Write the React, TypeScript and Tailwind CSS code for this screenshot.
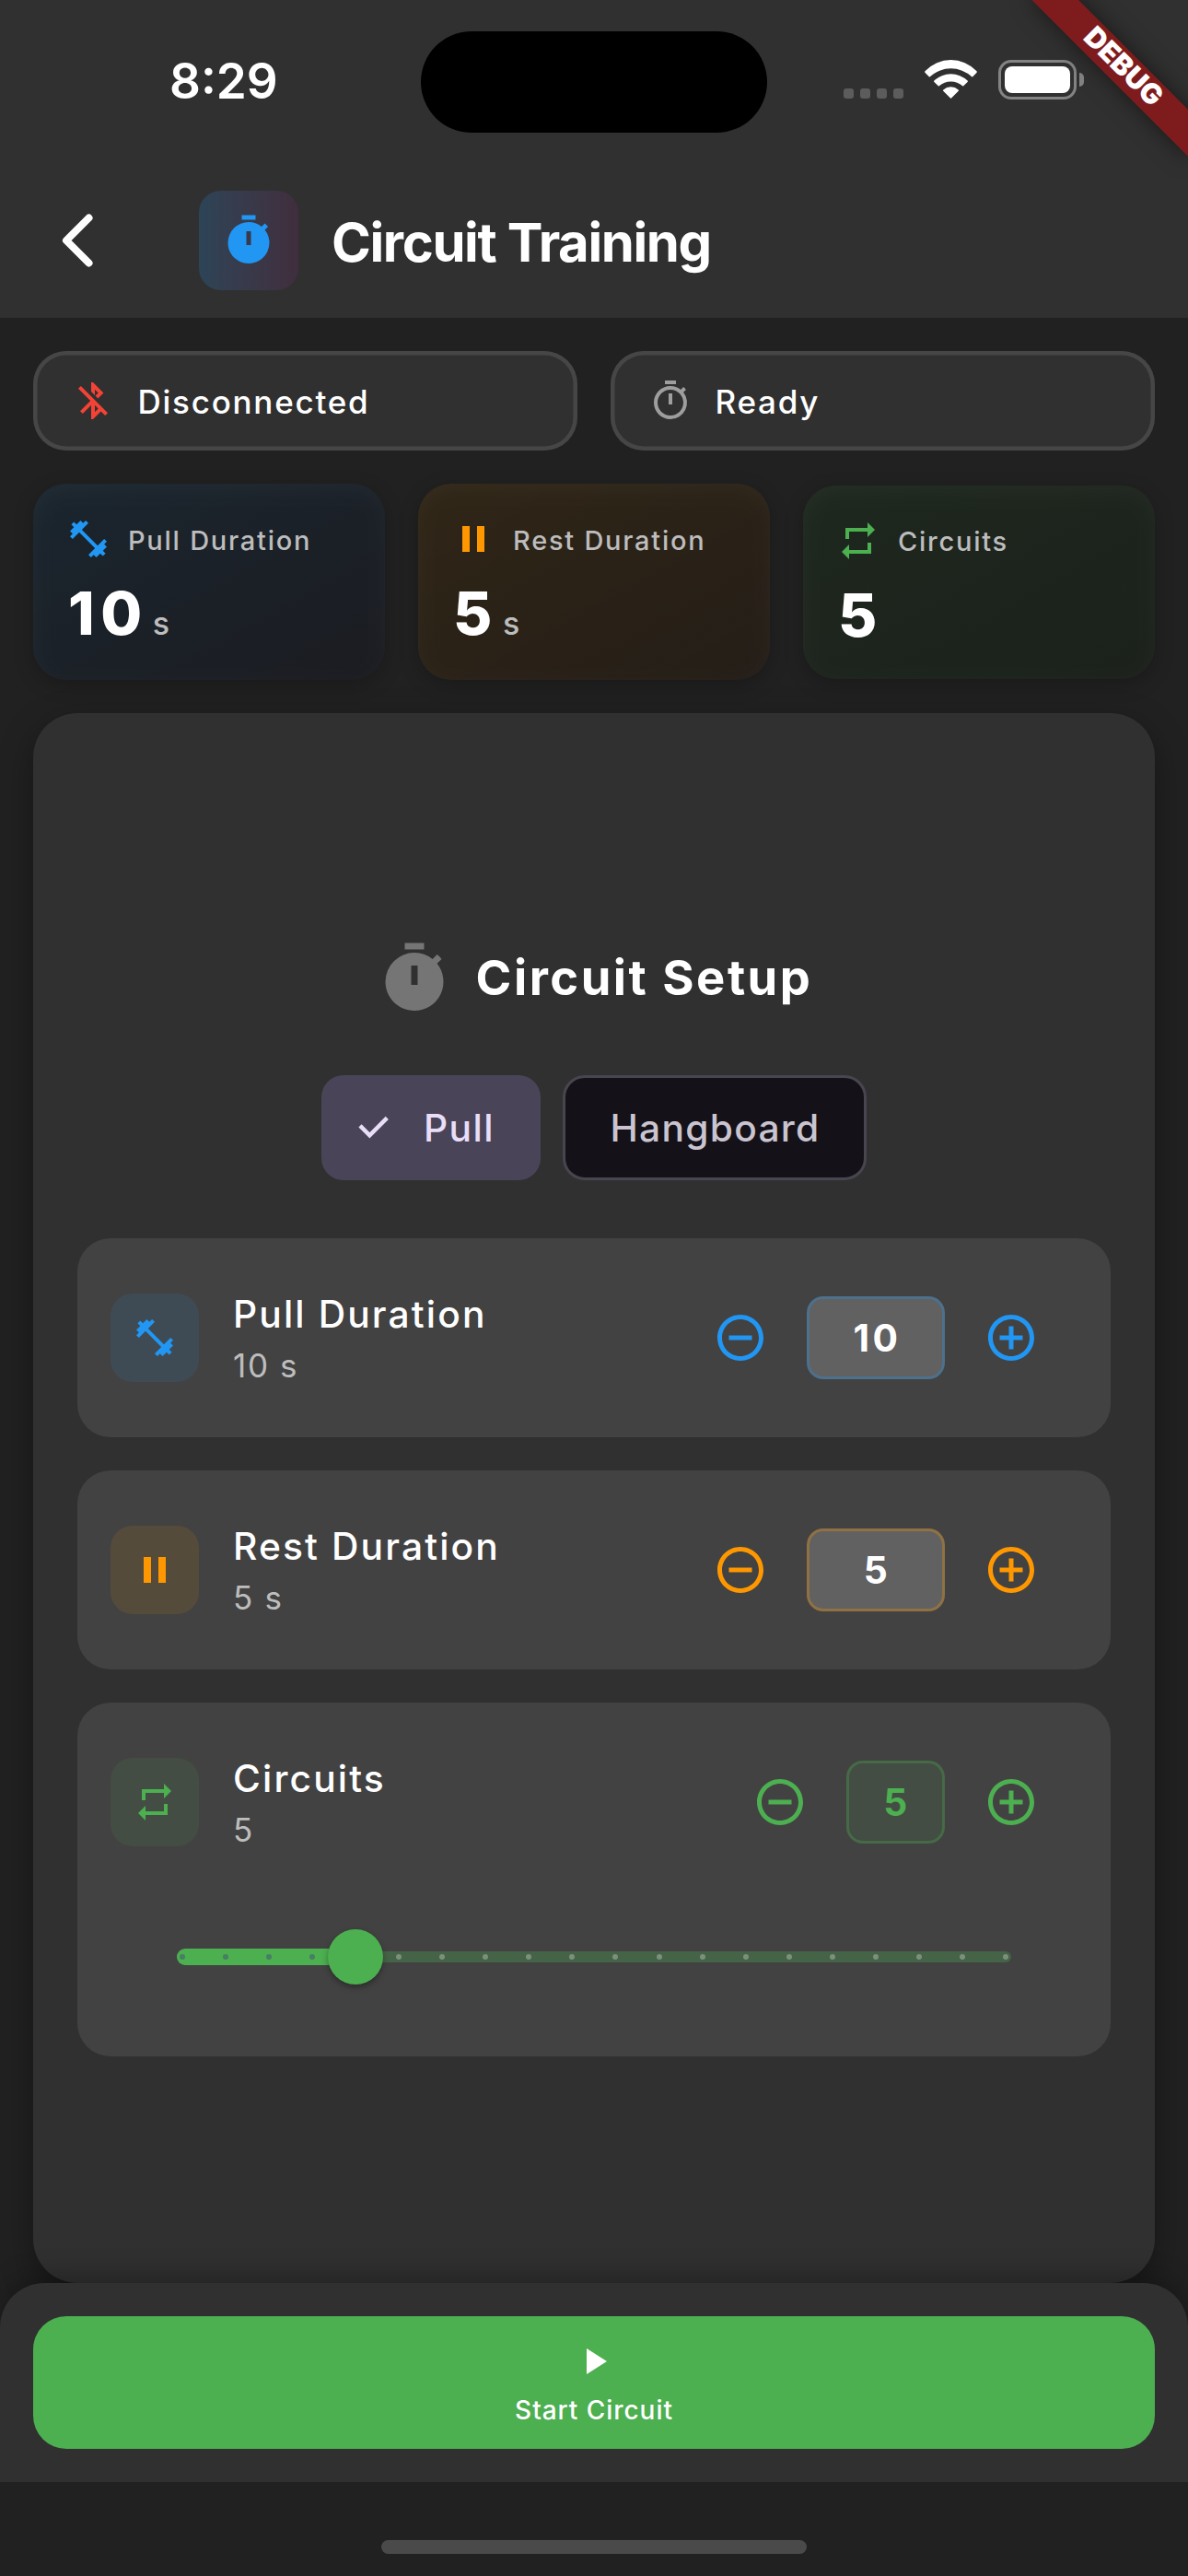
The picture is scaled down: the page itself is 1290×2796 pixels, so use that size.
import type { ReactNode } from 'react';
import {
  MdAddCircleOutline,
  MdBluetoothDisabled,
  MdFitnessCenter,
  MdOutlineTimer,
  MdPause,
  MdPlayArrow,
  MdRemoveCircleOutline,
  MdRepeat,
  MdTimer,
} from 'react-icons/md';

function WifiIcon() {
  return (
    <svg viewBox="0 0 57 42" className="mt-[65px] ml-[23px] h-[42px] w-[57px] fill-white">
      <path d="M.6 13.9Q-.3 13 .7 12.1A38 38 0 0 1 56.3 12.1Q57.300 13 56.400 13.900L52.200 18.200Q51.700 18.700 51.200 18.200A33.500 33.500 0 0 0 5.800 18.200Q5.300 18.700 4.800 18.200Z" />
      <path d="M10.400 23.900Q9.700 23.200 10.400 22.600A26 26 0 0 1 46.600 22.600Q47.300 23.200 46.600 23.900L42.200 28.300Q41.700 28.800 41.200 28.300A19.500 19.500 0 0 0 15.800 28.300Q15.300 28.800 14.800 28.300Z" />
      <path d="M20.200 33.700Q19.500 33 20.300 32.400A12.500 12.500 0 0 1 36.700 32.400Q37.500 33 36.800 33.700L29 41.500Q28.500 42 28 41.500Z" />
    </svg>
  );
}

function StatusBar() {
  return (
    <div className="flex h-[177px] items-start">
      <div className="w-[457px] pt-[56px] pl-[184px] text-[53px] leading-[64px] font-semibold text-white">8:29</div>
      <div className="mt-[34px] h-[110px] w-[376px] rounded-full bg-black" />
      <div className="mt-[96px] ml-[83px] flex w-[65px] justify-between">
        <i className="size-[11px] rounded-[3px] bg-[#5c5c5c]" />
        <i className="size-[11px] rounded-[3px] bg-[#5c5c5c]" />
        <i className="size-[11px] rounded-[3px] bg-[#5c5c5c]" />
        <i className="size-[11px] rounded-[3px] bg-[#5c5c5c]" />
      </div>
      <WifiIcon />
      <div className="mt-[65px] ml-[23px] flex items-center">
        <div className="h-[43px] w-[85px] rounded-[14px] border-[3px] border-[#838383] p-1">
          <div className="size-full rounded-[8px] bg-white" />
        </div>
        <div className="ml-[3px] h-[15px] w-[5px] rounded-r-[5px] bg-[#838383]" />
      </div>
    </div>
  );
}

function DebugRibbon() {
  return (
    <div className="absolute top-[84px] -right-[120px] z-30 flex h-9 w-60 origin-[120px_-84px] rotate-45 items-center justify-center bg-[#7e1c1d] pb-[3px] pl-[3px] text-[30.600px] leading-none font-black text-white shadow-[0_0_24px_rgba(0,0,0,0.5)]">
      DEBUG
    </div>
  );
}

function AppBar() {
  return (
    <div className="flex h-[168px] items-center pl-[66px]">
      <svg viewBox="0 0 36 58" className="h-[58px] w-9 fill-none stroke-white stroke-[8]">
        <path d="M30.500 4.500 6 29 30.500 53.500" strokeLinecap="round" strokeLinejoin="round" />
      </svg>
      <div className="ml-[114px] flex size-[108px] items-center justify-center rounded-[24px] bg-linear-to-r from-[#2d4457] to-[#402e3d]">
        <MdTimer className="size-[60px] text-[#2196f3]" />
      </div>
      <h1 className="ml-9 pt-1 text-[58px] leading-[70px] font-bold tracking-[-1.390px] text-white">Circuit Training</h1>
    </div>
  );
}

function StatusPill({ icon, children }: { icon: ReactNode; children: ReactNode }) {
  return (
    <div className="flex h-[108px] items-center gap-[25px] rounded-[36px] bg-[#303030] pl-[40.500px] inset-ring-[4.500px] inset-ring-[#464646]">
      {icon}
      <span className="pt-0.5 text-[35px] leading-[42px] font-medium tracking-[1.750px] text-white">{children}</span>
    </div>
  );
}

function StatCard({
  icon,
  label,
  value,
  unit,
  size,
  tint,
}: {
  icon: ReactNode;
  label: string;
  value: string;
  unit?: string;
  size: string;
  tint: string;
}) {
  return (
    <div className={`relative ${size}`}>
      <div className="absolute inset-0 translate-y-1.5 rounded-[36px] bg-black/22 blur-[10px]" />
      <div className={`relative h-full rounded-[36px] bg-linear-to-br px-9 pt-9 ${tint}`}>
        <div className="flex h-12 items-center gap-[19px]">
          {icon}
          <span className="pt-[3px] text-[29px] leading-9 font-medium tracking-[1.750px] whitespace-nowrap text-[#bdbdbd]">
            {label}
          </span>
        </div>
        <div className="mt-[21px] flex items-baseline pl-0.5 leading-[71px]">
          <span className="text-[65px] font-extrabold tracking-[6.500px] text-white">{value}</span>
          {unit && <span className="ml-[5px] text-[34px] font-medium text-[#bdbdbd]">{unit}</span>}
        </div>
      </div>
    </div>
  );
}

function Setting({
  icon,
  iconBox,
  title,
  subtitle,
  value,
  valueBox,
  accent,
  children,
}: {
  icon: ReactNode;
  iconBox: string;
  title: string;
  subtitle: string;
  value: string;
  valueBox: string;
  accent: string;
  children?: ReactNode;
}) {
  return (
    <section className="rounded-[36px] bg-[#424242] px-9 py-[60px]">
      <div className="flex h-24 items-center">
        <div className={`flex size-24 items-center justify-center rounded-[24px] ${iconBox} ${accent}`}>{icon}</div>
        <div className="ml-[37px] h-24 whitespace-nowrap">
          <p className="text-[40.750px] leading-[45px] font-[550] tracking-[2.120px] text-white">{title}</p>
          <p className="mt-[11px] text-[35px] leading-[44px] tracking-[1.650px] text-[#bdbdbd]">{subtitle}</p>
        </div>
        <button className={`ml-auto flex w-36 justify-center ${accent}`}>
          <MdRemoveCircleOutline className="size-[60px]" />
        </button>
        <div
          className={`flex h-[90px] items-center justify-center rounded-[18px] border-[3px] pl-[3px] text-[40.750px] font-bold tracking-[3.500px] ${valueBox}`}
        >
          {value}
        </div>
        <button className={`flex w-36 justify-center ${accent}`}>
          <MdAddCircleOutline className="size-[60px]" />
        </button>
      </div>
      {children}
    </section>
  );
}

function CircuitSlider() {
  return (
    <div className="mt-[90px] ml-[72px] grid h-[60px] w-[906px] items-center *:col-start-1 *:row-start-1">
      <div className="h-3 rounded-full bg-[#456346]" />
      <div className="h-[18px] w-[194px] rounded-l-full bg-[#4caf50]" />
      <div className="flex justify-between px-[3px]">
        {Array.from({ length: 20 }, (_, i) => (
          <i key={i} className={`size-1.5 rounded-full ${i < 4 ? 'bg-[#487e63]' : 'bg-[#7b8f7d]'}`} />
        ))}
      </div>
      <div className="ml-[164px] size-[60px] rounded-full bg-[#4caf50] shadow-[0_3px_6px_rgba(0,0,0,0.35)]" />
    </div>
  );
}

function SetupPanel() {
  return (
    <main className="flex h-[1704px] flex-col justify-center rounded-[48px] bg-[#303030] px-12 shadow-[0_12px_36px_rgba(0,0,0,0.35)]">
      <div className="flex h-[84px] items-center justify-center gap-6">
        <MdTimer className="size-[84px] text-[#757575]" />
        <h2 className="pb-0.5 pl-px text-[52.500px] leading-[64px] font-[650] tracking-[2.500px] whitespace-nowrap text-white">
          Circuit Setup
        </h2>
      </div>

      <div className="mt-[63.500px] flex justify-center gap-6 text-[40.750px] font-medium">
        <div className="flex h-[114px] w-[238px] items-center rounded-[24px] bg-[#4a4458] pl-[37px] tracking-[1.400px] text-[#e8def8]">
          <svg viewBox="0 0 40 30" className="h-[30px] w-10 fill-none stroke-[#e8def8] stroke-[4.500]">
            <path d="M5 12.800 15.400 23.300 34.300 4.400" />
          </svg>
          <span className="ml-[34px]">Pull</span>
        </div>
        <div className="flex h-[114px] w-[330px] items-center justify-center rounded-[24px] border-[3px] border-[#49454f] bg-[#141218] pl-px tracking-[1.250px] text-[#cac4d0]">
          Hangboard
        </div>
      </div>

      <div className="mt-[63px] flex flex-col gap-9">
        <Setting
          icon={<MdFitnessCenter className="size-12" />}
          iconBox="bg-[#3f4b54]"
          accent="text-[#2196f3]"
          title="Pull Duration"
          subtitle="10 s"
          value="10"
          valueBox="w-[150px] border-[#2196f3]/30 bg-[#616161] text-white"
        />
        <Setting
          icon={<MdPause className="size-12" />}
          iconBox="bg-[#554b3b]"
          accent="text-[#ff9800]"
          title="Rest Duration"
          subtitle="5 s"
          value="5"
          valueBox="w-[150px] border-[#ff9800]/30 bg-[#616161] text-white"
        />
        <Setting
          icon={<MdRepeat className="size-12" />}
          iconBox="bg-[#434d43]"
          accent="text-[#4caf50]"
          title="Circuits"
          subtitle="5"
          value="5"
          valueBox="w-[107px] border-[#4caf50]/30 bg-[#434d43] text-[#4caf50]"
        >
          <CircuitSlider />
          <div className="h-[18px]" />
        </Setting>
      </div>
    </main>
  );
}

export default function App() {
  return (
    <div className="relative flex h-[2796px] w-[1290px] flex-col overflow-hidden bg-[#212121] font-['Inter',sans-serif]">
      <header className="bg-[#303030]">
        <StatusBar />
        <AppBar />
      </header>
      <DebugRibbon />

      <div className="flex flex-col gap-9 px-9 pt-9">
        <div className="grid grid-cols-2 gap-9">
          <StatusPill icon={<MdBluetoothDisabled className="size-12 text-[#f44336]" />}>Disconnected</StatusPill>
          <StatusPill icon={<MdOutlineTimer className="size-12 text-[#9e9e9e]" />}>Ready</StatusPill>
        </div>

        <div className="grid h-[213px] grid-cols-3 items-center gap-9">
          <StatCard
            icon={<MdFitnessCenter className="size-12 text-[#2196f3]" />}
            label="Pull Duration"
            value="10"
            unit="s"
            size="h-[213px]"
            tint="from-[#2196f3]/10 to-[#3f51b5]/5"
          />
          <StatCard
            icon={<MdPause className="size-12 text-[#ff9800]" />}
            label="Rest Duration"
            value="5"
            unit="s"
            size="h-[213px]"
            tint="from-[#ff9800]/10 to-[#ff7a00]/5"
          />
          <StatCard
            icon={<MdRepeat className="size-12 text-[#4caf50]" />}
            label="Circuits"
            value="5"
            size="h-[210px]"
            tint="from-[#4caf50]/10 to-[#4caf50]/5"
          />
        </div>

        <SetupPanel />
      </div>

      <footer className="relative z-10 h-[216px] rounded-t-[48px] bg-[#303030] p-9 shadow-[0_-6px_30px_rgba(0,0,0,0.3)]">
        <button className="flex h-36 w-full flex-col items-center rounded-[36px] bg-[#4caf50] pt-[25px] text-white">
          <MdPlayArrow className="size-12" />
          <span className="mt-[11px] text-[28px] leading-[36px] font-medium tracking-[0.950px]">Start Circuit</span>
        </button>
      </footer>
      <div className="relative z-20 flex flex-1 justify-center bg-[#212121] pt-[63px]">
        <div className="h-[15px] w-[462px] rounded-full bg-[#4a4a4a]" />
      </div>
    </div>
  );
}
